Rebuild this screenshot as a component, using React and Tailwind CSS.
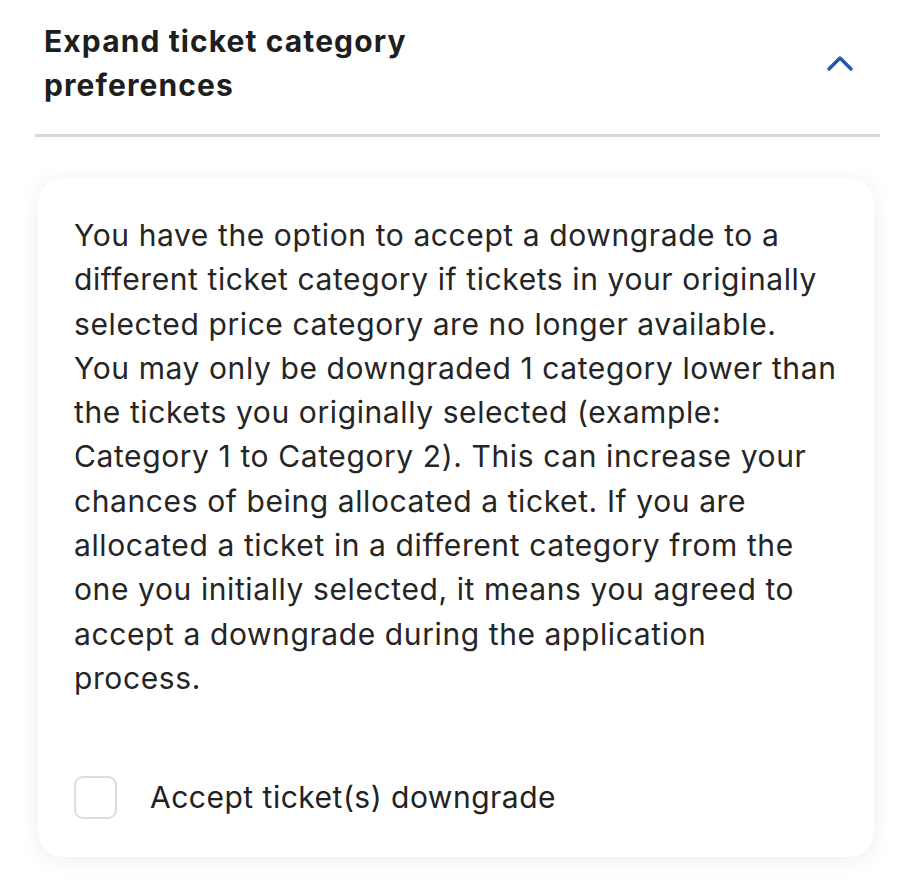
import React from "react";

const lines = [
  "You have the option to accept a downgrade to a",
  "different ticket category if tickets in your originally",
  "selected price category are no longer available.",
  "You may only be downgraded 1 category lower than",
  "the tickets you originally selected (example:",
  "Category 1 to Category 2). This can increase your",
  "chances of being allocated a ticket. If you are",
  "allocated a ticket in a different category from the",
  "one you initially selected, it means you agreed to",
  "accept a downgrade during the application",
  "process.",
];

function ChevronUp() {
  return (
    <svg width="30" height="20" viewBox="0 0 30 20" fill="none">
      <path d="M4 16 L15 5 L26 16" stroke="#2456b3" strokeWidth="3.5" strokeLinecap="round" strokeLinejoin="round" />
    </svg>
  );
}

export default function App() {
  const [accepted, setAccepted] = React.useState(false);
  return (
    <div className="min-h-[889px] w-[912px] bg-white font-['Inter',sans-serif] text-[#222]">
      <div className="pl-[35px] pr-[32px] pt-[19px]">
        <div className="flex items-center justify-between border-b-[3px] border-[#d8d8d8] pb-[27px] pl-[9px] pr-[25px]">
          <h2 className="text-[30px] font-bold leading-[44px] tracking-[1.1px] text-[#1e1e1e]">
            Expand ticket category
            <br />
            preferences
          </h2>
          <ChevronUp />
        </div>
      </div>
      <div className="mx-[38px] mt-[41px] rounded-[26px] bg-white px-[36px] pb-[38px] pt-[35px] shadow-[0_3px_22px_rgba(0,0,0,0.07)]">
        <p className="whitespace-nowrap text-[30px] leading-[44.3px] tracking-[0.6px] text-[#252525]">
          {lines.map((l, i) => (
            <span key={i}>
              {l}
              {i < lines.length - 1 && <br />}
            </span>
          ))}
        </p>
        <label className="mt-[75px] flex cursor-pointer items-center gap-[33px]">
          <input
            type="checkbox"
            checked={accepted}
            onChange={(e) => setAccepted(e.target.checked)}
            className="peer sr-only"
          />
          <span className="h-[43px] w-[43px] rounded-[9px] border-2 border-[#dcdcdc] bg-white" />
          <span className="text-[30px] leading-[44px] tracking-[0.5px] text-[#222]">Accept ticket(s) downgrade</span>
        </label>
      </div>
    </div>
  );
}
